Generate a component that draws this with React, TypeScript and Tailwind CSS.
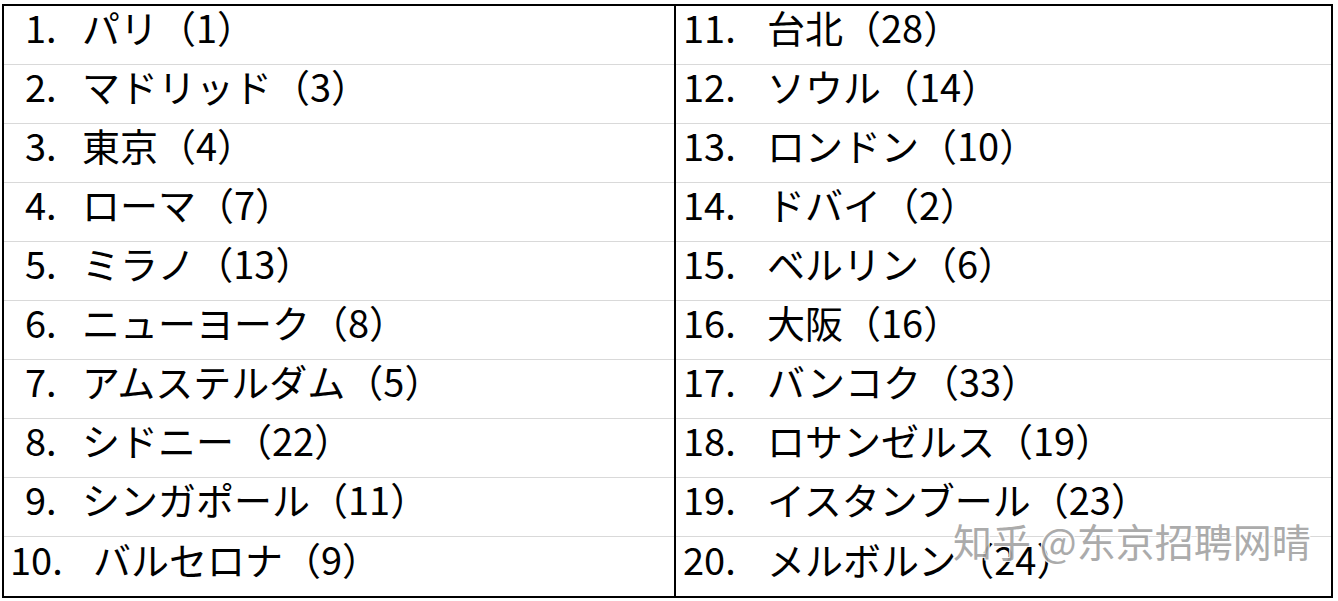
const left = [
  ['1.', 'パリ（1）'],
  ['2.', 'マドリッド（3）'],
  ['3.', '東京（4）'],
  ['4.', 'ローマ（7）'],
  ['5.', 'ミラノ（13）'],
  ['6.', 'ニューヨーク（8）'],
  ['7.', 'アムステルダム（5）'],
  ['8.', 'シドニー（22）'],
  ['9.', 'シンガポール（11）'],
  ['10.', 'バルセロナ（9）'],
]

const right = [
  ['11.', '台北（28）'],
  ['12.', 'ソウル（14）'],
  ['13.', 'ロンドン（10）'],
  ['14.', 'ドバイ（2）'],
  ['15.', 'ベルリン（6）'],
  ['16.', '大阪（16）'],
  ['17.', 'バンコク（33）'],
  ['18.', 'ロサンゼルス（19）'],
  ['19.', 'イスタンブール（23）'],
  ['20.', 'メルボルン（24）'],
]

function Row({ num, name, last, side }: { num: string; name: string; last: boolean; side: 'l' | 'r' }) {
  const wide = num.length > 2
  return (
    <div
      className={`flex h-[59px] items-center pb-[16px] ${last ? '' : 'border-b border-[#d9d9d9]'}`}
    >
      {side === 'l' ? (
        <>
          <span className={wide ? 'w-[82px] pl-[6px]' : 'w-[78px] pl-[21px]'}>{num}</span>
          <span className={wide ? 'pl-[7px]' : ''}>{name}</span>
        </>
      ) : (
        <>
          <span className="w-[91px] pl-[7px]">{num}</span>
          <span>{name}</span>
        </>
      )}
    </div>
  )
}

export default function App() {
  return (
    <div className="relative h-[601px] w-[1338px] bg-white">
      <div
        className="absolute left-[2px] top-[4px] flex h-[594px] w-[1331px] border-2 border-black text-[38px] leading-none text-black"
        style={{ fontFamily: '"Noto Sans CJK JP", "Noto Sans", sans-serif' }}
      >
        <div className="flex w-[670px] flex-col">
          {left.map(([n, c], i) => (
            <Row key={n} num={n} name={c} last={i === 9} side="l" />
          ))}
        </div>
        <div className="w-[2px] bg-black" />
        <div className="flex flex-1 flex-col">
          {right.map(([n, c], i) => (
            <Row key={n} num={n} name={c} last={i === 9} side="r" />
          ))}
        </div>
      </div>
      {/* watermark */}
      <div
        className="absolute left-[953px] top-[521px] whitespace-nowrap text-[39px] leading-none text-[#a3a3a3] opacity-90"
        style={{
          fontFamily: '"Noto Sans CJK SC", sans-serif',
          textShadow: '1px 1px 0 #fff, -1px -1px 0 #fff, 1px -1px 0 #fff, -1px 1px 0 #fff',
        }}
      >
        知乎 @东京招聘网晴
      </div>
    </div>
  )
}
